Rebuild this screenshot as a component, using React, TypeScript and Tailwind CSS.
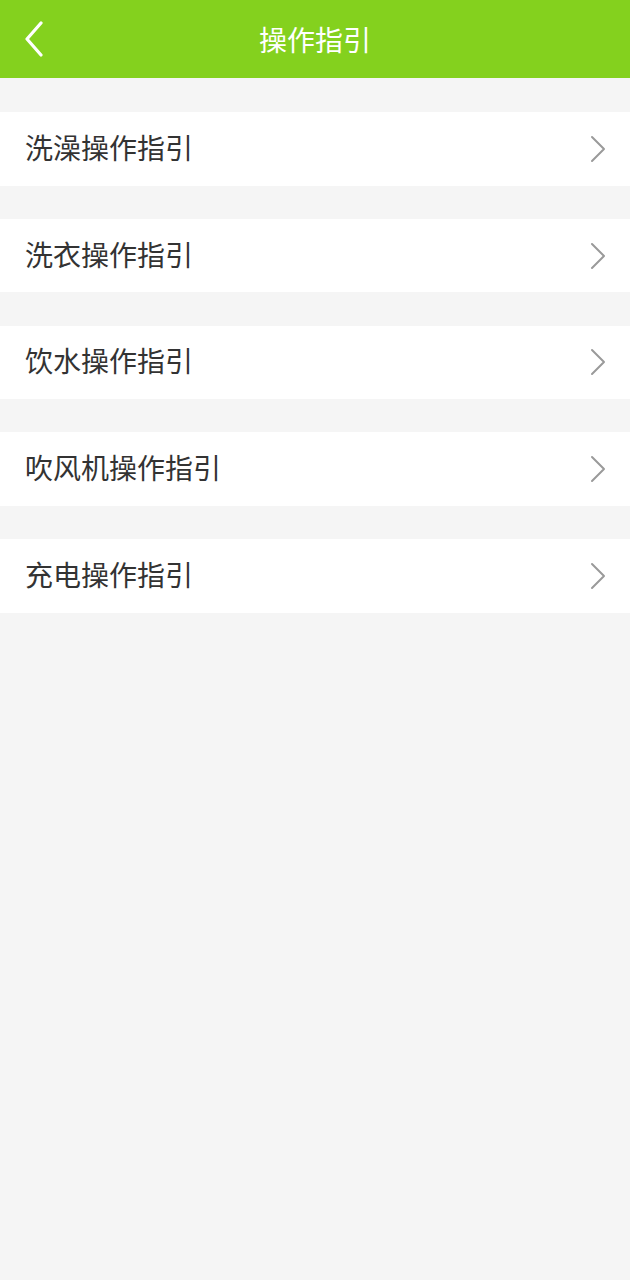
import React from "react";

const items = ["洗澡操作指引", "洗衣操作指引", "饮水操作指引", "吹风机操作指引", "充电操作指引"];

export default function App() {
  return (
    <div
      className="min-h-[1280px] w-full bg-[#f5f5f5]"
      style={{ fontFamily: '"Noto Sans CJK SC", "Noto Sans", sans-serif' }}
    >
      <div className="relative flex h-[78px] items-center justify-center bg-[#84d11e]">
        <svg
          className="absolute left-[22px] top-[21px]"
          width="24"
          height="36"
          viewBox="0 0 24 36"
          fill="none"
        >
          <path d="M19 2 L5 18 L19 34" stroke="#ffffff" strokeWidth="3.2" strokeLinecap="round" strokeLinejoin="round" />
        </svg>
        <span className="text-[28px] leading-none text-white">操作指引</span>
      </div>
      <div className="flex flex-col gap-[33.25px] pt-[34px]">
        {items.map((t) => (
          <div key={t} className="flex h-[73.5px] items-center justify-between bg-white pl-[25px] pr-[24px]">
            <span className="-translate-y-[2px] text-[28px] leading-none text-[#333333]">{t}</span>
            <svg width="16" height="28" viewBox="0 0 16 28" fill="none">
              <path d="M2 2 L14 14 L2 26" stroke="#9a9a9a" strokeWidth="2" strokeLinecap="round" strokeLinejoin="round" />
            </svg>
          </div>
        ))}
      </div>
    </div>
  );
}
